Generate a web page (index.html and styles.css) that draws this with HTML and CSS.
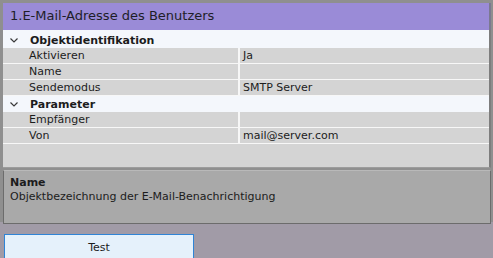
FILE: index.html
```html
<!DOCTYPE html>
<html lang="de">
<head>
    <meta charset="UTF-8">
    <title>E-Mail-Adresse des Benutzers</title>
    <link rel="stylesheet" href="styles.css">
</head>
<body>
<div class="frame">
    <div class="title">1.E-Mail-Adresse des Benutzers</div>
    <div class="grid">
        <div class="cat first">
            <span class="toggle"><svg width="8" height="5" viewBox="0 0 8 5"><polyline points="0.5,0.5 4,4 7.5,0.5" fill="none" stroke="#3a3a3a" stroke-width="1.2"/></svg></span>
            <span class="cat-name">Objektidentifikation</span>
        </div>
        <div class="row"><span class="key">Aktivieren</span><span class="val">Ja</span></div>
        <div class="row"><span class="key">Name</span><span class="val"></span></div>
        <div class="row"><span class="key">Sendemodus</span><span class="val">SMTP Server</span></div>
        <div class="cat">
            <span class="toggle"><svg width="8" height="5" viewBox="0 0 8 5"><polyline points="0.5,0.5 4,4 7.5,0.5" fill="none" stroke="#3a3a3a" stroke-width="1.2"/></svg></span>
            <span class="cat-name">Parameter</span>
        </div>
        <div class="row"><span class="key">Empfänger</span><span class="val"></span></div>
        <div class="row"><span class="key">Von</span><span class="val">mail@server.com</span></div>
    </div>
    <div class="desc">
        <div class="desc-title">Name</div>
        <div>Objektbezeichnung der E-Mail-Benachrichtigung</div>
    </div>
</div>
<div class="actions">
    <button class="btn">Test</button>
</div>
</body>
</html>
```

FILE: styles.css
```css
* {
    margin: 0;
    padding: 0;
    box-sizing: border-box;
}

body {
    background-color: #a19ba7;
    font-family: "DejaVu Sans", Verdana, sans-serif;
    font-size: 11px;
    color: #1c1c1c;
}

.frame {
    background-color: #8f8f8f;
    padding: 3px 2px 0 3px;
    height: 222px;
}

.title {
    height: 27px;
    line-height: 26px;
    padding-left: 7px;
    font-size: 13px;
    background-color: #9a8bd7;
    border-right: 2px solid #7b7990;
    color: #1e1e28;
}

.grid {
    height: 138px;
    background-color: #d4d4d4;
    border-right: 2px solid #7d7d7d;
    border-bottom: 1px solid #9c9c9c;
}

.cat {
    display: flex;
    align-items: center;
    height: 16px;
    background-color: #f4f7fc;
    font-weight: bold;
}

.cat.first {
    height: 18px;
    padding-top: 2px;
}

.toggle {
    flex: none;
    display: flex;
    width: 27px;
    padding-left: 7px;
}

.cat-name {
    flex: none;
}

.row {
    display: flex;
    height: 16px;
    line-height: 15px;
    border-bottom: 1px solid #f7f7f7;
    padding-left: 23px;
}

.key {
    width: 214px;
    padding-left: 3px;
    border-right: 2px solid #f7f7f7;
}

.val {
    flex: 1;
    padding-left: 3px;
}

.desc {
    height: 54px;
    margin-top: 2px;
    padding: 5px 0 0 6px;
    line-height: 14px;
    background-color: #a9a9a9;
    border: 1px solid #6c6c6c;
    border-top: 1px solid #b9b9b9;
}

.desc-title {
    font-weight: bold;
}

.actions {
    padding: 12px 0 0 4px;
}

.btn {
    width: 190px;
    height: 30px;
    padding-bottom: 4px;
    font-family: "DejaVu Sans", Verdana, sans-serif;
    font-size: 11px;
    color: #1c1c1c;
    background-color: #e5f1fb;
    border: 1px solid #2f84d6;
}
```
